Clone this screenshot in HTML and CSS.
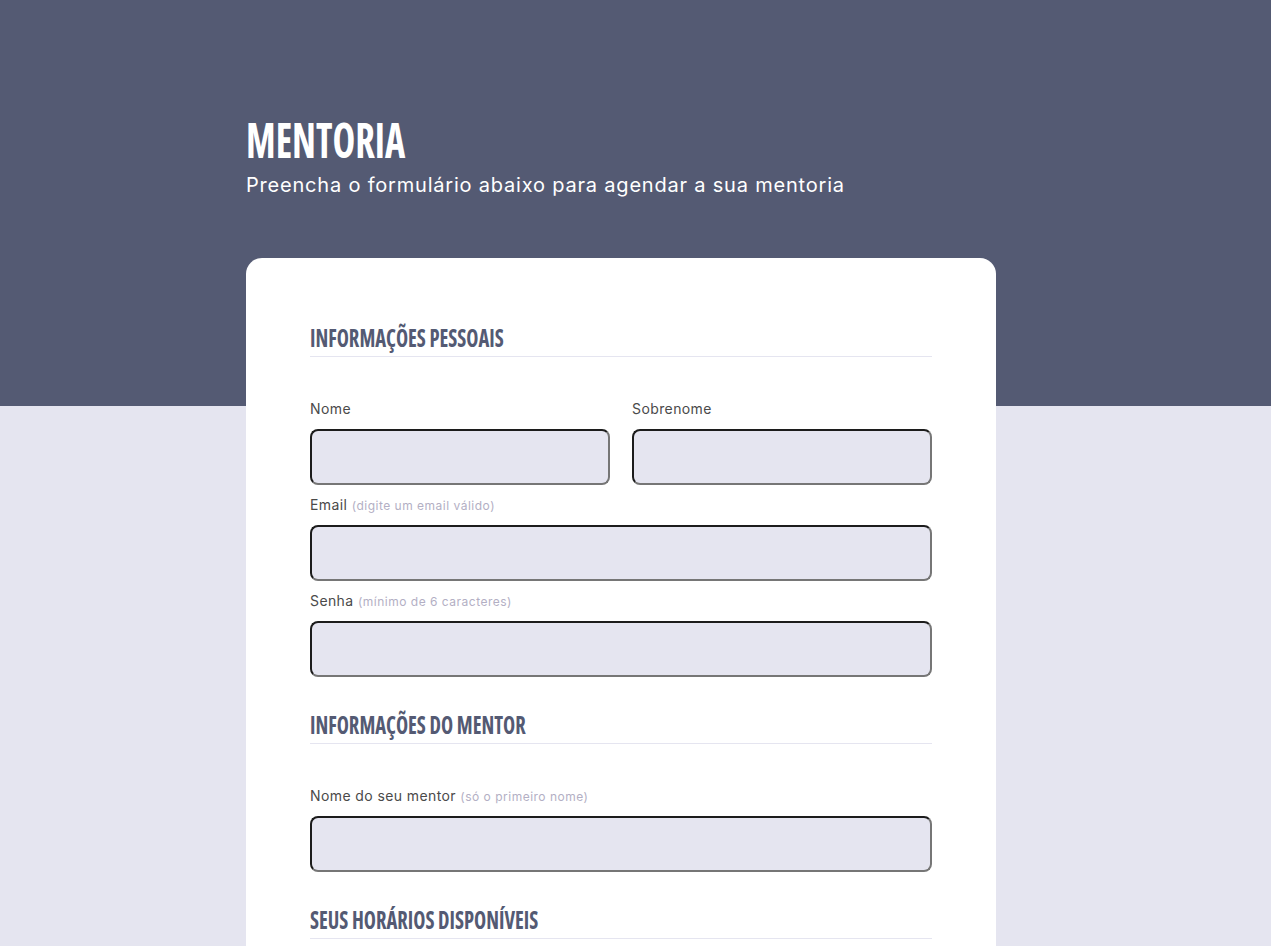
FILE: index.html
```html
<!DOCTYPE html>
<html lang="pt-BR">
<head>
<meta charset="utf-8">
<title>Mentoria</title>
<link rel="stylesheet" href="styles.css">
</head>
<body>
<header class="hero">
  <div class="container">
    <h1 class="title"><span class="squeeze">MENTORIA</span></h1>
    <p class="subtitle">Preencha o formulário abaixo para agendar a sua mentoria</p>
  </div>
</header>
<main class="container">
  <form class="card">
    <section class="section">
      <h2 class="section-title"><span class="squeeze">Informações pessoais</span></h2>
      <div class="fields">
        <div class="row">
          <label class="field">
            <span class="label">Nome</span>
            <input class="input" type="text">
          </label>
          <label class="field">
            <span class="label">Sobrenome</span>
            <input class="input" type="text">
          </label>
        </div>
        <label class="field">
          <span class="label">Email <span class="hint">(digite um email válido)</span></span>
          <input class="input" type="email">
        </label>
        <label class="field">
          <span class="label">Senha <span class="hint">(mínimo de 6 caracteres)</span></span>
          <input class="input" type="password">
        </label>
      </div>
    </section>
    <section class="section">
      <h2 class="section-title"><span class="squeeze">Informações do mentor</span></h2>
      <div class="fields">
        <label class="field">
          <span class="label">Nome do seu mentor <span class="hint">(só o primeiro nome)</span></span>
          <input class="input" type="text">
        </label>
      </div>
    </section>
    <section class="section">
      <h2 class="section-title"><span class="squeeze">Seus horários disponíveis</span></h2>
    </section>
  </form>
</main>
</body>
</html>
```
FILE: styles.css
```css
html {
  scrollbar-width: none;
}
html::-webkit-scrollbar {
  display: none;
}
body {
  margin: 0;
  background: #e5e5f0;
  font-family: Inter, "Noto Sans", sans-serif;
  color: #4a4a4a;
}
.container {
  width: 779px;
  margin: 0 auto;
}
.hero {
  background: #545a73;
  height: 406px;
  box-sizing: border-box;
  padding-top: 116px;
}
.squeeze {
  display: inline-block;
  transform-origin: left center;
}
.title {
  margin: 0;
  font-family: "Open Sans", sans-serif;
  font-stretch: 75%;
  font-weight: 700;
  font-size: 48px;
  line-height: 1;
  color: #ffffff;
}
.title .squeeze {
  transform: scaleX(0.8);
}
.subtitle {
  margin: 6px 0 0;
  font-size: 20px;
  line-height: 30px;
  letter-spacing: 0.8px;
  color: #ffffff;
}
.card {
  width: 750px;
  margin-top: -148px;
  background: #ffffff;
  border-radius: 16px;
  box-sizing: border-box;
  padding: 66px 64px 300px;
  display: flex;
  flex-direction: column;
  gap: 34px;
}
.section {
  display: flex;
  flex-direction: column;
  gap: 42px;
}
.section-title {
  margin: 0;
  font-family: "Open Sans", sans-serif;
  font-stretch: 75%;
  font-weight: 700;
  font-size: 24px;
  line-height: 28px;
  height: 28px;
  text-transform: uppercase;
  color: #545a73;
  padding-bottom: 4px;
  border-bottom: 1px solid #e5e5f0;
  white-space: nowrap;
}
.section-title .squeeze {
  transform: scaleX(0.855);
}
.fields {
  display: flex;
  flex-direction: column;
  gap: 10px;
}
.row {
  display: flex;
  gap: 22px;
}
.row .field {
  flex: 1;
}
.field {
  display: flex;
  flex-direction: column;
  gap: 10px;
}
.label {
  font-size: 14px;
  line-height: 20px;
  height: 20px;
  letter-spacing: 0.4px;
  color: #4a4a4a;
}
.hint {
  font-size: 12px;
  line-height: 1;
  letter-spacing: 0.5px;
  color: #b3afc4;
}
.input {
  height: 56px;
  box-sizing: border-box;
  margin: 0;
  background: #e5e5f0;
  border: 2px solid;
  border-color: #1c1c1c #767676 #767676 #1c1c1c;
  border-radius: 8px;
  font: inherit;
}
```
